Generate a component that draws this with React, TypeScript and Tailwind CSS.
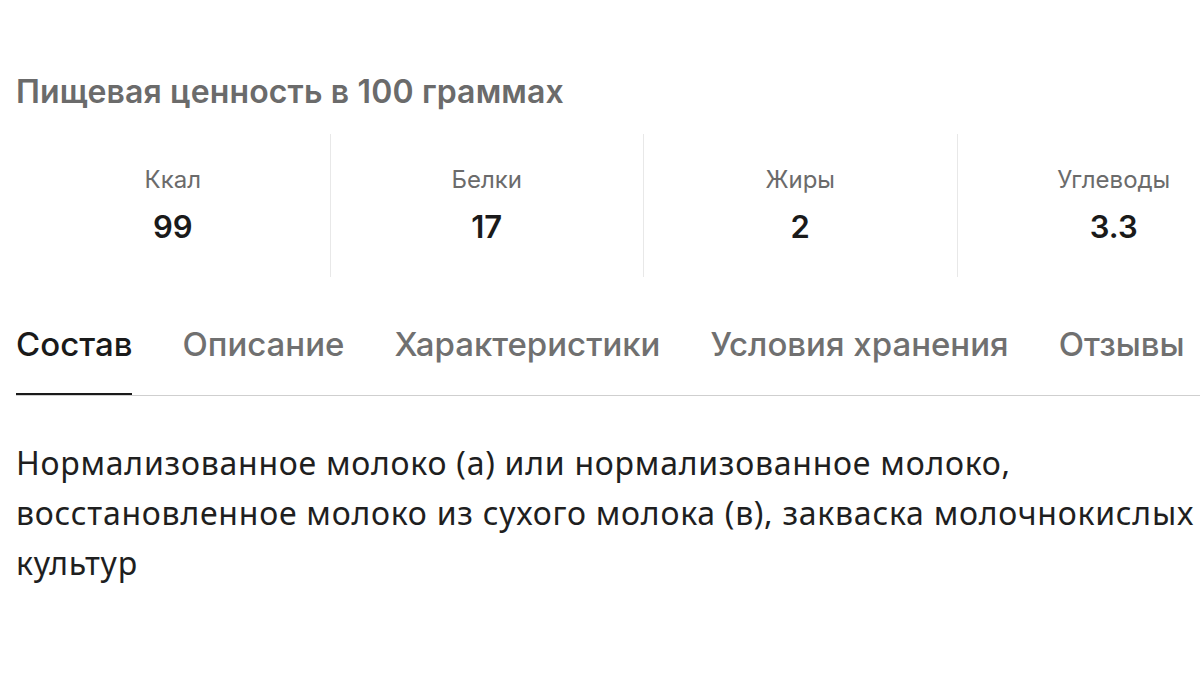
import React from "react";

const stats = [
  { label: "Ккал", value: "99" },
  { label: "Белки", value: "17" },
  { label: "Жиры", value: "2" },
  { label: "Углеводы", value: "3.3" },
];

const tabs = ["Состав", "Описание", "Характеристики", "Условия хранения", "Отзывы"];

const App = () => {
  return (
    <div
      className="w-[1200px] h-[675px] overflow-hidden bg-white pl-4"
      style={{ fontFamily: "Inter, 'Noto Sans', sans-serif" }}
    >
      <h2 className="pt-[72px] text-[32px] leading-[40px] font-semibold text-[#6b6b6b] tracking-[0.15px]">
        Пищевая ценность в 100 граммах
      </h2>

      {/* пищевая ценность */}
      <div className="mt-[22px] flex w-[1254px]">
        {stats.map((s, i) => (
          <div
            key={s.label}
            className={
              "w-[313.5px] shrink-0 h-[143px] flex flex-col items-center pt-[31px] " +
              (i > 0 ? "border-l border-[#e8e8e8]" : "")
            }
          >
            <div className="text-[24px] leading-[30px] text-[#6b6b6b]">{s.label}</div>
            <div className="mt-[13px] text-[31px] leading-[38px] font-semibold text-[#1a1a1a]">
              {s.value}
            </div>
          </div>
        ))}
      </div>

      {/* вкладки */}
      <div className="mt-[47px] flex gap-[50px] border-b border-[#cfcfcf] w-[1184px]">
        {tabs.map((t, i) => (
          <div key={t} className="relative shrink-0 pb-[31px]">
            <span
              className={
                "block text-[33px] leading-[40px] font-medium whitespace-nowrap " +
                (i === 0 ? "text-[#1a1a1a]" : "text-[#707070]")
              }
            >
              {t}
            </span>
            {i === 0 && <div className="absolute left-0 right-0 bottom-0 h-[2px] bg-[#1a1a1a]" />}
          </div>
        ))}
      </div>

      <p
        className="mt-[42px] w-[1200px] text-[32px] leading-[50px] tracking-[0.75px] text-[#1f1f1f] whitespace-nowrap"
        style={{ fontFamily: "'Noto Sans', Inter, sans-serif" }}
      >
        Нормализованное молоко (а) или нормализованное молоко,
        <br />
        восстановленное молоко из сухого молока (в), закваска молочнокислых
        <br />
        культур
      </p>
    </div>
  );
};

export default App;
